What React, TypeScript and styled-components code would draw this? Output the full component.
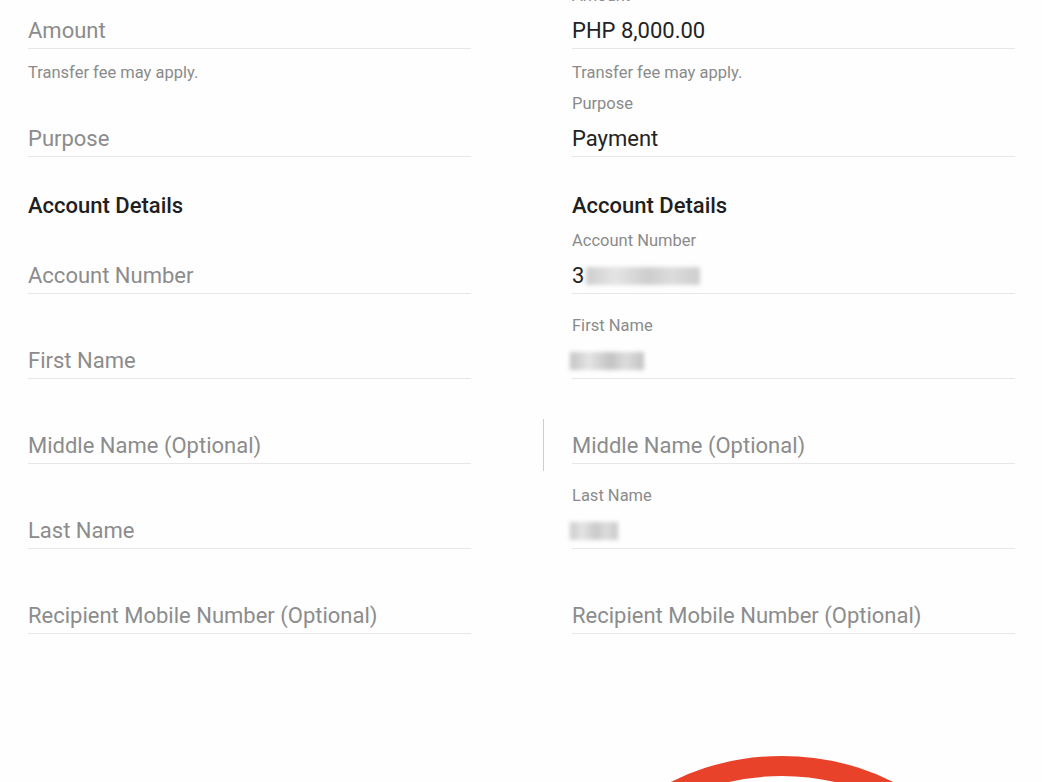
import styled, { createGlobalStyle } from "styled-components";

const GlobalStyle = createGlobalStyle`
  html, body {
    margin: 0;
    padding: 0;
    background: #fefefe;
    overflow: hidden;
  }
  body {
    font-family: Roboto, "Noto Sans", "Liberation Sans", sans-serif;
  }
`;

type FieldProps = {
  label?: string;
  value?: React.ReactNode;
  placeholder?: string;
  marker?: boolean;
};

const Field = ({ label, value, placeholder, marker }: FieldProps) => (
  <FieldBox $marker={marker}>
    <Label>{label ?? "\u00a0"}</Label>
    {value ? <Value>{value}</Value> : <Placeholder>{placeholder}</Placeholder>}
  </FieldBox>
);

export default function App() {
  return (
    <>
      <GlobalStyle />
      <Page>
        <Column>
          <Field placeholder="Amount" />
          <Hint>Transfer fee may apply.</Hint>
          <Field placeholder="Purpose" />
          <Heading>Account Details</Heading>
          <Field placeholder="Account Number" />
          <Field placeholder="First Name" />
          <Field placeholder="Middle Name (Optional)" />
          <Field placeholder="Last Name" />
          <Field placeholder="Recipient Mobile Number (Optional)" />
        </Column>
        <Column>
          <Field label="Amount" value="PHP 8,000.00" />
          <Hint>Transfer fee may apply.</Hint>
          <Field label="Purpose" value="Payment" />
          <Heading>Account Details</Heading>
          <Field
            label="Account Number"
            value={
              <>
                3<Redacted $w={114} $shade="#c9c9c9" />
              </>
            }
          />
          <Field label="First Name" value={<Redacted $w={74} $shade="#bdbdbd" $offset={-2} />} />
          <Field placeholder="Middle Name (Optional)" marker />
          <Field label="Last Name" value={<Redacted $w={48} $shade="#c4c4c4" $offset={-2} />} />
          <Field placeholder="Recipient Mobile Number (Optional)" />
        </Column>
        {/* red marker circle drawn over the bottom of the screenshot */}
        <Circle viewBox="0 0 1042 30" width="1042" height="30">
          <ellipse cx="782" cy="176" rx="200" ry="162" fill="none" stroke="#e8432a" strokeWidth="20" />
        </Circle>
      </Page>
    </>
  );
}

const Page = styled.div`
  position: relative;
  width: 1042px;
  height: 782px;
  padding: 0 27px 0 28px;
  box-sizing: border-box;
  display: grid;
  grid-template-columns: 443px 443px;
  column-gap: 101px;
  overflow: hidden;
`;

const Column = styled.div`
  display: flex;
  flex-direction: column;
  margin-top: -14px;
`;

const FieldBox = styled.div<{ $marker?: boolean }>`
  position: relative;
  display: flex;
  flex-direction: column;
  height: 63px;
  box-sizing: border-box;
  padding-bottom: 4px;
  border-bottom: 1px solid #e7e7e7;
  margin-bottom: 22px;

  &::before {
    content: "";
    display: ${({ $marker }) => ($marker ? "block" : "none")};
    position: absolute;
    left: -29px;
    top: 18px;
    width: 1px;
    height: 52px;
    background: #b9d6d6;
  }
`;

const Label = styled.div`
  font-size: 16.5px;
  line-height: 20px;
  color: #8b8b8b;
  height: 20px;
  margin-bottom: 11px;
`;

const Value = styled.div`
  display: flex;
  align-items: center;
  font-size: 22px;
  line-height: 28px;
  height: 28px;
  color: #232323;
  white-space: nowrap;
`;

const Placeholder = styled(Value)`
  color: #8c8c8c;
`;

const Redacted = styled.span<{ $w: number; $shade: string; $offset?: number }>`
  display: inline-block;
  width: ${({ $w }) => $w}px;
  height: 18px;
  margin-left: ${({ $offset }) => $offset ?? 2}px;
  background: linear-gradient(
    90deg,
    ${({ $shade }) => $shade} 0%,
    #e2e2e2 25%,
    ${({ $shade }) => $shade} 55%,
    #d9d9d9 75%,
    ${({ $shade }) => $shade} 100%
  );
  filter: blur(2px);
  opacity: 0.9;
`;

const Hint = styled.div`
  font-size: 16.5px;
  line-height: 20px;
  color: #8b8b8b;
  margin-top: -8px;
  margin-bottom: 11px;
`;

const Heading = styled.div`
  font-size: 22px;
  font-weight: 500;
  line-height: 26px;
  color: #1f1f1f;
  margin-top: 14px;
  margin-bottom: 12px;
`;

const Circle = styled.svg`
  position: absolute;
  left: 0;
  bottom: 0;
  pointer-events: none;
`;
